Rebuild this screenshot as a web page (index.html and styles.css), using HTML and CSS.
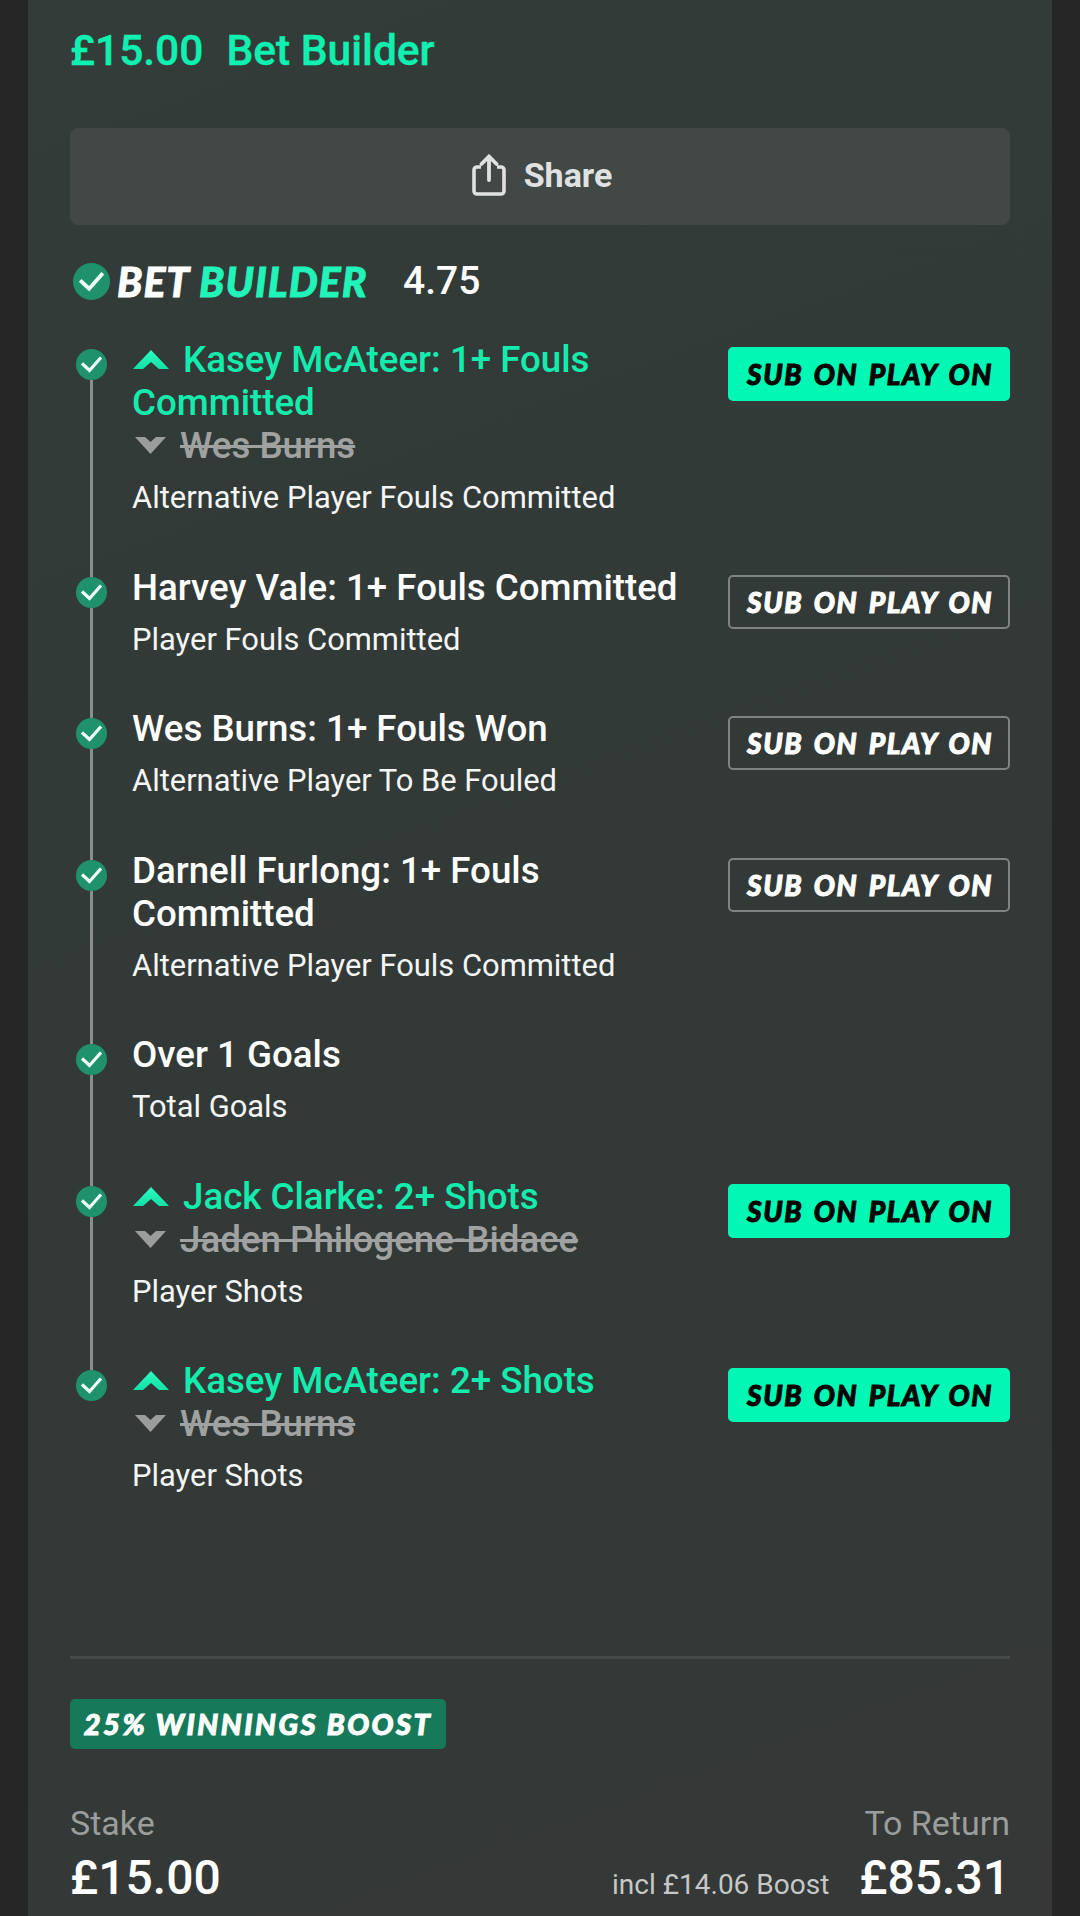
FILE: index.html
```html
<!DOCTYPE html>
<html lang="en">
<head>
<meta charset="utf-8">
<title>Bet Builder</title>
<link rel="stylesheet" href="styles.css">
</head>
<body>
<svg class="defs" aria-hidden="true">
  <defs>
    <linearGradient id="upg" x1="0" y1="0" x2="0" y2="1"><stop offset="0" stop-color="#2dfcc0"/><stop offset="1" stop-color="#12e0a4"/></linearGradient>
  </defs>
  <symbol id="check" viewBox="0 0 31 31">
    <circle cx="15.5" cy="15.5" r="15.5" fill="#1f926d"/>
    <path d="M6 14.5 L13.5 21.5 L25 8.5" fill="none" stroke="#f0fffa" stroke-width="3.2"/>
  </symbol>
  <symbol id="up" viewBox="0 0 36 19">
    <path d="M18 0 L36 19 L26 19 L18 12 L10 19 L0 19 Z" fill="url(#upg)"/>
  </symbol>
  <symbol id="down" viewBox="0 0 31 17">
    <path d="M0 0 L10 0 L15.5 5 L21 0 L31 0 L15.5 17 Z" fill="#9b9d9c"/>
  </symbol>
</svg>
<div class="shell">
  <main class="panel">
    <h1 class="heading"><span>£15.00</span><span>Bet Builder</span></h1>
    <button class="share" type="button">
      <svg class="share-icon" viewBox="0 0 34 42" aria-hidden="true">
        <path d="M9 13 H5 A3 3 0 0 0 2 16 V37 A3 3 0 0 0 5 40 H29 A3 3 0 0 0 32 37 V16 A3 3 0 0 0 29 13 H25" fill="none" stroke="#e0e2e1" stroke-width="3.6"/>
        <path d="M17 26 V3 M9.5 10 L17 2.5 L24.5 10" fill="none" stroke="#e0e2e1" stroke-width="3.8" stroke-linecap="round"/>
      </svg>
      <span>Share</span>
    </button>
    <div class="builder">
      <svg class="builder-check" viewBox="0 0 31 31" aria-hidden="true"><use href="#check"/></svg>
      <span class="builder-name"><span class="w">BET</span> <span class="g">BUILDER</span></span>
      <span class="builder-odds">4.75</span>
    </div>
    <ol class="legs">
      <li class="leg">
        <div class="rail"><svg class="dot"><use href="#check"/></svg><i class="line"></i></div>
        <div class="info">
          <div class="title on"><svg class="arrow-up"><use href="#up"/></svg>Kasey McAteer: 1+ Fouls Committed</div>
          <div class="title off"><svg class="arrow-down"><use href="#down"/></svg><s>Wes Burns</s></div>
          <div class="market">Alternative Player Fouls Committed</div>
        </div>
        <span class="badge solid">SUB ON PLAY ON</span>
      </li>
      <li class="leg">
        <div class="rail"><svg class="dot"><use href="#check"/></svg><i class="line"></i></div>
        <div class="info">
          <div class="title">Harvey Vale: 1+ Fouls Committed</div>
          <div class="market">Player Fouls Committed</div>
        </div>
        <span class="badge">SUB ON PLAY ON</span>
      </li>
      <li class="leg">
        <div class="rail"><svg class="dot"><use href="#check"/></svg><i class="line"></i></div>
        <div class="info">
          <div class="title">Wes Burns: 1+ Fouls Won</div>
          <div class="market">Alternative Player To Be Fouled</div>
        </div>
        <span class="badge">SUB ON PLAY ON</span>
      </li>
      <li class="leg">
        <div class="rail"><svg class="dot"><use href="#check"/></svg><i class="line"></i></div>
        <div class="info">
          <div class="title">Darnell Furlong: 1+ Fouls Committed</div>
          <div class="market">Alternative Player Fouls Committed</div>
        </div>
        <span class="badge">SUB ON PLAY ON</span>
      </li>
      <li class="leg">
        <div class="rail"><svg class="dot"><use href="#check"/></svg><i class="line"></i></div>
        <div class="info">
          <div class="title">Over 1 Goals</div>
          <div class="market">Total Goals</div>
        </div>
      </li>
      <li class="leg">
        <div class="rail"><svg class="dot"><use href="#check"/></svg><i class="line"></i></div>
        <div class="info">
          <div class="title on"><svg class="arrow-up"><use href="#up"/></svg>Jack Clarke: 2+ Shots</div>
          <div class="title off"><svg class="arrow-down"><use href="#down"/></svg><s>Jaden Philogene-Bidace</s></div>
          <div class="market">Player Shots</div>
        </div>
        <span class="badge solid">SUB ON PLAY ON</span>
      </li>
      <li class="leg">
        <div class="rail"><svg class="dot"><use href="#check"/></svg></div>
        <div class="info">
          <div class="title on"><svg class="arrow-up"><use href="#up"/></svg>Kasey McAteer: 2+ Shots</div>
          <div class="title off"><svg class="arrow-down"><use href="#down"/></svg><s>Wes Burns</s></div>
          <div class="market">Player Shots</div>
        </div>
        <span class="badge solid">SUB ON PLAY ON</span>
      </li>
    </ol>
    <hr class="rule">
    <div class="boost">25% WINNINGS BOOST</div>
    <div class="totals">
      <div class="total">
        <div class="label">Stake</div>
        <div class="amount">£15.00</div>
      </div>
      <div class="total right">
        <div class="label">To Return</div>
        <div class="amount-row"><span class="incl">incl £14.06 Boost</span><span class="amount">£85.31</span></div>
      </div>
    </div>
  </main>
</div>
</body>
</html>
```
FILE: styles.css
```css
* { box-sizing: border-box; }
html, body { margin: 0; padding: 0; }
body {
  width: 1080px;
  height: 1916px;
  overflow: hidden;
  background: #262626;
  font-family: Roboto, "Liberation Sans", sans-serif;
  color: #fff;
}
.defs { position: absolute; width: 0; height: 0; }
.shell { padding: 0 28px; height: 1916px; }
.panel {
  height: 1916px;
  padding: 0 42px;
  background: linear-gradient(160deg, #333c39 0%, #323937 45%, #353837 100%);
}
.heading {
  margin: 0;
  padding-top: 28px;
  height: 128px;
  display: flex;
  gap: 23px;
  font-size: 42.5px;
  line-height: 46px;
  font-weight: 500;
  color: #10f0b0;
  -webkit-text-stroke: 0.4px #10f0b0;
}
.share {
  display: flex;
  align-items: center;
  justify-content: center;
  gap: 18px;
  width: 100%;
  height: 97px;
  padding: 0 0 3px 4px;
  border: 0;
  border-radius: 8px;
  background: #414846;
  color: #e0e2e1;
  font: 700 34px Roboto, sans-serif;
}
.share-icon { width: 34px; height: 42px; margin-top: -1px; }
.builder {
  display: flex;
  align-items: center;
  height: 46px;
  margin-top: 33px;
  padding-left: 3px;
}
.builder-check { width: 37px; height: 37px; margin-right: 7px; }
.builder-name {
  font-family: Lato, sans-serif;
  font-weight: 900;
  font-style: italic;
  font-size: 41px;
  letter-spacing: 1px;
  width: 286px;
  white-space: nowrap;
  -webkit-text-stroke: 0.8px currentColor;
}
.builder-name .g { color: #22f3b8; }
.builder-odds { font-size: 39px; font-weight: 500; }
.legs {
  list-style: none;
  margin: 34px 0 0;
  padding: 0;
}
.leg { display: flex; }
.rail {
  width: 63px;
  padding-left: 6px;
  display: flex;
  flex-direction: column;
  align-items: flex-start;
}
.dot { width: 31px; height: 31px; margin-top: 11px; flex: none; }
.line { flex: 1; width: 3px; margin-left: 14px; background: #898f8c; margin-bottom: -11px; }
.info { flex: 1; padding-bottom: 46.5px; padding-right: 36px; margin-left: -1px; }
.title {
  font-size: 36.7px;
  line-height: 43px;
  font-weight: 500;
}
.title.on { color: #14ecae; }
.title.off { color: #a0a2a1; }
.arrow-up { width: 36px; height: 19px; margin: 0 14px 0 1px; vertical-align: 3px; }
.arrow-down { width: 31px; height: 17px; margin: 0 14px 0 3px; vertical-align: 4px; }
.market {
  margin-top: 9px;
  font-size: 30.9px;
  line-height: 43px;
  font-weight: 400;
  color: #f4f5f5;
}
.badge {
  flex: none;
  width: 282px;
  height: 54px;
  margin-top: 9px;
  padding-left: 2px;
  display: flex;
  align-items: center;
  justify-content: center;
  border: 2px solid #7f8482;
  border-radius: 5px;
  font-family: Lato, sans-serif;
  font-weight: 900;
  font-style: italic;
  font-size: 28px;
  letter-spacing: 1.6px;
  word-spacing: 3px;
  -webkit-text-stroke: 1px currentColor;
  color: #fff;
  white-space: nowrap;
}
.badge.solid { background: #00f8b4; border-color: #00f8b4; color: #050505; }
.rule {
  margin: 112px 0 0;
  border: 0;
  height: 3px;
  background: #454a48;
}
.boost {
  margin-top: 40px;
  width: 376px;
  height: 50px;
  display: flex;
  align-items: center;
  justify-content: center;
  border-radius: 5px;
  background: #167a5a;
  font-family: Lato, sans-serif;
  font-weight: 900;
  font-style: italic;
  font-size: 29px;
  letter-spacing: 2.5px;
  -webkit-text-stroke: 1px currentColor;
  white-space: nowrap;
}
.totals {
  display: flex;
  justify-content: space-between;
  margin-top: 50px;
}
.label {
  font-size: 34px;
  line-height: 49px;
  color: #9b9d9c;
}
.right { text-align: right; }
.amount {
  font-size: 48px;
  line-height: 60px;
  font-weight: 500;
}
.amount-row {
  display: flex;
  align-items: baseline;
  gap: 30px;
}
.incl { font-size: 28px; color: #c6c8c7; }
```
